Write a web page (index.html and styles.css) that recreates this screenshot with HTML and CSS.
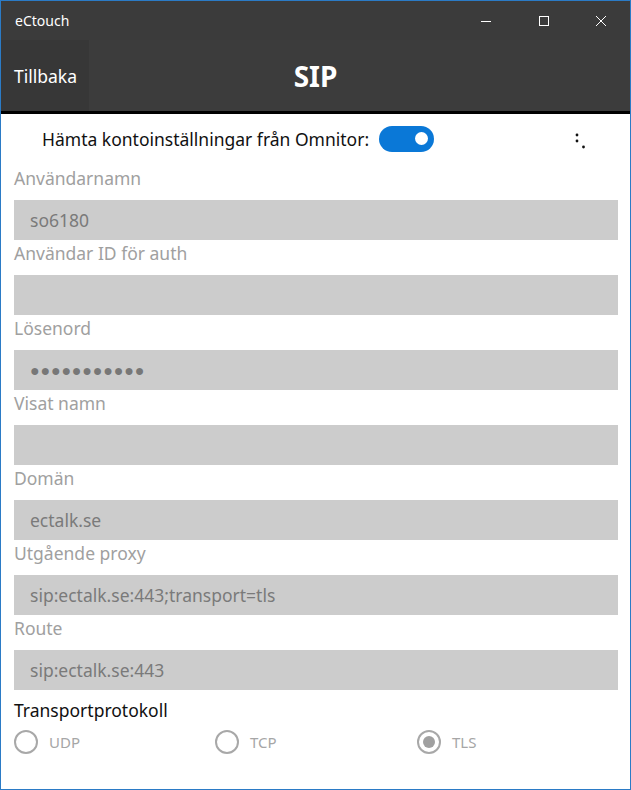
FILE: index.html
```html
<!DOCTYPE html>
<html lang="sv">
<head>
  <meta charset="UTF-8" />
  <title>eCtouch</title>
  <link rel="stylesheet" href="styles.css">
</head>
<body>
  <div class="window">
    <div class="titlebar">
      <span class="app-name">eCtouch</span>
      <div class="controls">
        <span class="ctl ctl-min">
          <svg width="12" height="12" viewBox="0 0 12 12"><path d="M1 6.5h10" stroke="#fff" stroke-width="1"/></svg>
        </span>
        <span class="ctl ctl-max">
          <svg width="12" height="12" viewBox="0 0 12 12"><rect x="1.5" y="1.5" width="9" height="9" fill="none" stroke="#fff" stroke-width="1"/></svg>
        </span>
        <span class="ctl ctl-close">
          <svg width="12" height="12" viewBox="0 0 12 12"><path d="M1 1l10 10M11 1L1 11" stroke="#fff" stroke-width="1"/></svg>
        </span>
      </div>
    </div>

    <div class="header">
      <div class="back">Tillbaka</div>
      <h1>SIP</h1>
    </div>

    <div class="content">
      <div class="toggle-row">
        <span class="toggle-label">Hämta kontoinställningar från Omnitor:</span>
        <span class="toggle"><span class="knob"></span></span>
        <span class="busy">
          <svg width="12" height="18" viewBox="0 0 12 18">
            <circle cx="2" cy="3" r="1.4" fill="#111"/>
            <circle cx="2" cy="9" r="1.4" fill="#111"/>
            <circle cx="8.5" cy="15" r="1.4" fill="#111"/>
          </svg>
        </span>
      </div>

      <div class="label">Användarnamn</div>
      <div class="field">so6180</div>
      <div class="label">Användar ID för auth</div>
      <div class="field"></div>
      <div class="label">Lösenord</div>
      <div class="field password">●●●●●●●●●●●</div>
      <div class="label">Visat namn</div>
      <div class="field"></div>
      <div class="label">Domän</div>
      <div class="field">ectalk.se</div>
      <div class="label">Utgående proxy</div>
      <div class="field">sip:ectalk.se:443;transport=tls</div>
      <div class="label">Route</div>
      <div class="field">sip:ectalk.se:443</div>

      <div class="section">Transportprotokoll</div>
      <div class="radios">
        <div class="radio"><span class="ring"></span>UDP</div>
        <div class="radio"><span class="ring"></span>TCP</div>
        <div class="radio checked"><span class="ring"></span>TLS</div>
      </div>
    </div>
  </div>
</body>
</html>
```

FILE: styles.css
```css
* {
  box-sizing: border-box;
}
body {
  margin: 0;
  font-family: "Noto Sans", "Open Sans", sans-serif;
  background: #fff;
}
.window {
  width: 631px;
  height: 790px;
  border: 1px solid #2b7bc6;
  background: #fff;
  overflow: hidden;
}
.titlebar {
  height: 39px;
  background: #3b3b3b;
  display: flex;
  align-items: center;
  justify-content: space-between;
  padding-left: 14px;
  color: #fff;
}
.app-name {
  font-size: 14px;
}
.controls {
  display: flex;
}
.ctl {
  height: 39px;
  display: flex;
  align-items: center;
  justify-content: center;
}
.ctl-min {
  width: 60px;
}
.ctl-max {
  width: 56px;
}
.ctl-close {
  width: 58px;
}
.header {
  height: 74px;
  background: #3c3c3c;
  border-bottom: 3px solid #000;
  display: flex;
  align-items: stretch;
  position: relative;
  color: #fff;
}
.back {
  width: 88px;
  background: #373737;
  display: flex;
  align-items: center;
  padding-left: 13px;
  font-size: 17.5px;
}
.header h1 {
  position: absolute;
  left: 0;
  right: 0;
  top: 0;
  bottom: 0;
  margin: 0;
  display: flex;
  align-items: center;
  justify-content: center;
  font-size: 28px;
  font-weight: 700;
  pointer-events: none;
}
.content {
  padding: 0 12px 0 13px;
}
.toggle-row {
  height: 51px;
  display: flex;
  align-items: center;
  padding-left: 28px;
  padding-bottom: 2px;
}
.toggle-label {
  font-size: 17.5px;
  color: #111;
}
.toggle {
  width: 55px;
  height: 26px;
  border-radius: 13px;
  background: #0a78d7;
  margin-left: 10px;
  display: flex;
  align-items: center;
  justify-content: flex-end;
  padding-right: 6px;
}
.knob {
  width: 13px;
  height: 13px;
  border-radius: 50%;
  background: #fff;
}
.busy {
  margin-left: auto;
  margin-right: 31px;
  display: flex;
  padding-top: 4px;
}
.label {
  height: 35px;
  font-size: 17.5px;
  color: #a0a0a0;
  line-height: 26px;
}
.field {
  height: 40px;
  background: #cccccc;
  color: #7a7a7a;
  font-size: 17.5px;
  line-height: 40px;
  padding-left: 16px;
}
.field.password {
  font-size: 16px;
  letter-spacing: 0.8px;
  color: #777;
}
.section {
  height: 38px;
  padding-top: 6px;
  font-size: 17.5px;
  color: #111;
  line-height: 28px;
}
.radios {
  display: grid;
  grid-template-columns: 201px 202px 1fr;
}
.radio {
  display: flex;
  align-items: center;
  gap: 11px;
  font-size: 15px;
  color: #a6a6a6;
  height: 28px;
}
.ring {
  width: 24px;
  height: 24px;
  border-radius: 50%;
  border: 2px solid #a8a8a8;
  display: flex;
  align-items: center;
  justify-content: center;
}
.radio.checked .ring::after {
  content: "";
  width: 12px;
  height: 12px;
  border-radius: 50%;
  background: #a0a0a0;
}
```
